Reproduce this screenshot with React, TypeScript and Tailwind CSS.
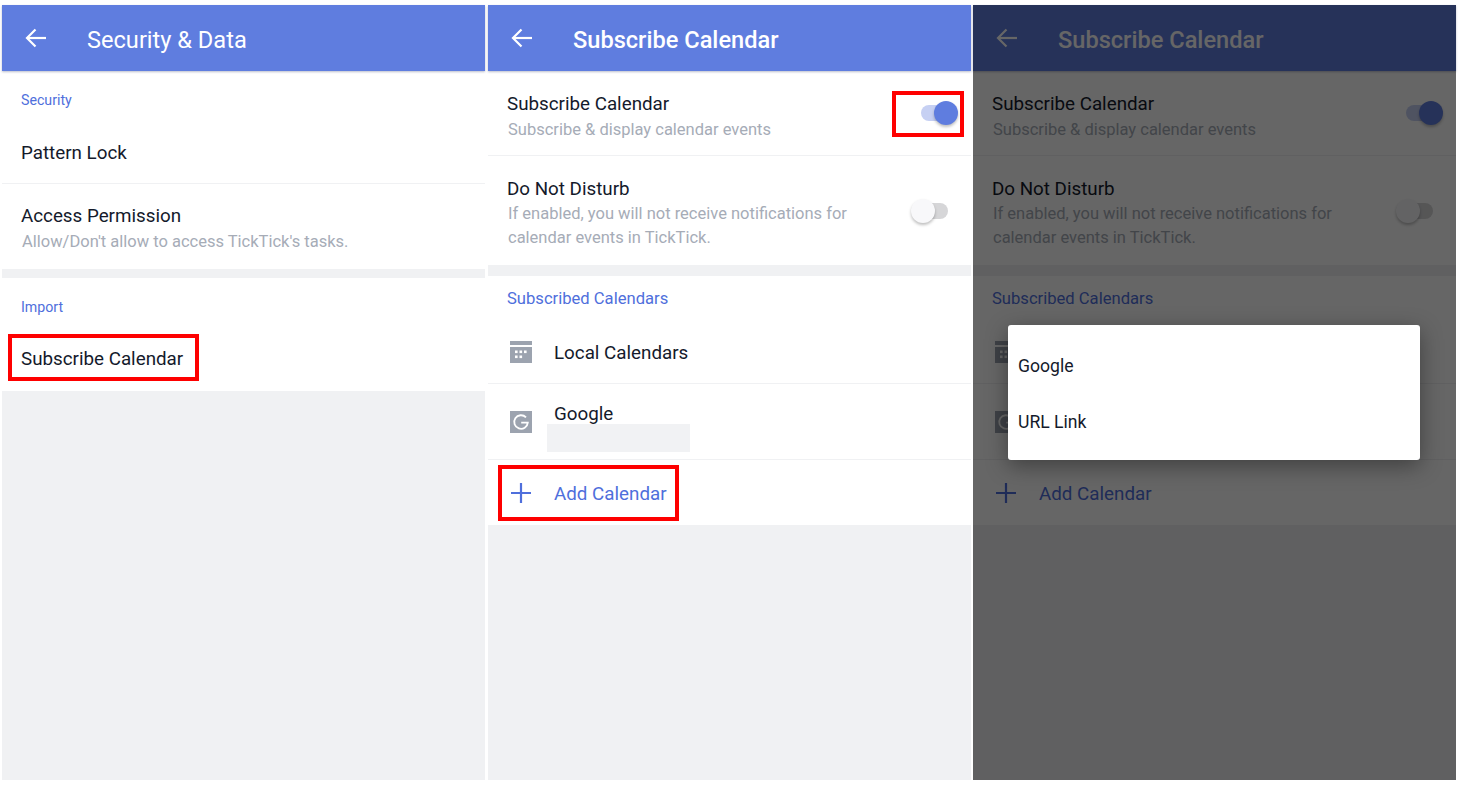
import type { ReactNode } from "react";

const font = "font-['Roboto',sans-serif]";

function BackArrow() {
  return (
    <svg width="22" height="20" viewBox="0 0 22 20" fill="none" stroke="currentColor" strokeWidth="2.2">
      <path d="M21 10H2.5" />
      <path d="M10.5 1.5 2 10l8.5 8.5" />
    </svg>
  );
}

function Header({ title, medium }: { title: string; medium?: boolean }) {
  return (
    <div className="h-[66px] shrink-0 bg-[#5f7ddf] text-white flex items-center pl-[23px] shadow-[0_1px_2px_rgba(60,70,110,0.35)] relative">
      <BackArrow />
      <span className={`ml-[40px] mt-[5px] text-[23.6px] leading-none ${medium ? "font-medium" : ""}`}>{title}</span>
    </div>
  );
}

function SectionLabel({ children, className }: { children: ReactNode; className: string }) {
  return <div className={`pl-[19px] pt-[2px] text-[#4f6fdc] flex items-center ${className}`}>{children}</div>;
}

function Toggle({ on }: { on: boolean }) {
  return on ? (
    <div className="w-[37px] h-[24px] relative">
      <div className="absolute left-0 top-[4px] w-[30px] h-[16px] rounded-full bg-[#c6d0f3]" />
      <div className="absolute right-0 top-0 w-[24px] h-[24px] rounded-full bg-[#5f7ddf] shadow-[0_2px_3px_rgba(0,0,0,0.25)]" />
    </div>
  ) : (
    <div className="w-[37px] h-[24px] relative">
      <div className="absolute right-0 top-[4px] w-[30px] h-[16px] rounded-full bg-[#d6d6d8]" />
      <div className="absolute left-0 top-0 w-[24px] h-[24px] rounded-full bg-[#f8f8fa] shadow-[0_2px_3px_rgba(0,0,0,0.25)]" />
    </div>
  );
}

function CalendarIcon() {
  return (
    <svg width="22" height="22" viewBox="0 0 22 22" fill="#9ca3af">
      <rect x="0" y="0" width="22" height="4" />
      <rect x="0" y="6" width="22" height="16" />
      <g fill="#fff">
        <rect x="5" y="9.5" width="2.6" height="2.6" />
        <rect x="9.5" y="9.5" width="2.6" height="2.6" />
        <rect x="14" y="9.5" width="2.6" height="2.6" />
        <rect x="5" y="14.5" width="2.6" height="2.6" />
        <rect x="9.5" y="14.5" width="2.6" height="2.6" />
      </g>
    </svg>
  );
}

function GoogleIcon() {
  return (
    <svg width="22" height="22" viewBox="0 0 22 22" fill="none">
      <rect width="22" height="22" fill="#9ca3af" />
      <path d="M16 6.4A6.8 6.8 0 1 0 17.8 11.6H11.2" stroke="#fff" strokeWidth="1.8" />
    </svg>
  );
}

function PlusIcon() {
  return (
    <svg width="20" height="20" viewBox="0 0 20 20" stroke="#4f6fdc" strokeWidth="2.2">
      <path d="M10 0v20M0 10h20" />
    </svg>
  );
}

function RedBox({ className }: { className: string }) {
  return <div className={`absolute border-[4px] border-[#fe0000] ${className}`} />;
}

function SecurityPanel() {
  return (
    <div className="w-[483px] h-[775px] bg-[#f0f1f3] flex flex-col text-[18.8px] text-[#141a2b]">
      <Header title="Security & Data" />
      <div className="bg-white h-[198px] flex flex-col">
        <SectionLabel className="h-[58px] text-[14.2px]">Security</SectionLabel>
        <div className="h-[55px] pb-[6px] pl-[19px] flex items-center border-b border-[#f0f1f3]">Pattern Lock</div>
        <div className="pl-[19px] pt-[19px]">
          <div className="leading-[26px]">Access Permission</div>
          <div className="text-[16.5px] leading-[25px] text-[#a6acb7] pl-px">Allow/Don't allow to access TickTick's tasks.</div>
        </div>
      </div>
      <div className="bg-white mt-[9px] h-[113px] flex flex-col">
        <SectionLabel className="h-[58px] text-[14.2px]">Import</SectionLabel>
        <div className="relative h-[46px] pl-[19px] flex items-center">
          <span className="mt-[1px]">Subscribe Calendar</span>
          <RedBox className="left-[6px] top-[-2px] w-[191px] h-[47px]" />
        </div>
      </div>
    </div>
  );
}

function CalendarPanel({ dimmed }: { dimmed?: boolean }) {
  return (
    <div className="w-[483px] h-[775px] bg-[#f0f1f3] flex flex-col text-[18.8px] text-[#141a2b] relative">
      <Header title="Subscribe Calendar" medium />
      <div className="bg-white">
        <div className="relative h-[85px] pl-[19px] pr-[13px] pt-[20px] flex justify-between border-b border-[#f0f1f3]">
          <div>
            <div className="leading-[26px]">Subscribe Calendar</div>
            <div className="text-[16.5px] leading-[25px] text-[#a6acb7] pl-px">Subscribe &amp; display calendar events</div>
          </div>
          <div className="pt-[10px]">
            <Toggle on />
          </div>
          {!dimmed && <RedBox className="right-[7px] top-[20px] w-[72px] h-[46px]" />}
        </div>
        <div className="h-[109px] pl-[19px] pr-[23px] pt-[20px] flex justify-between">
          <div>
            <div className="leading-[26px]">Do Not Disturb</div>
            <div className="text-[16.5px] leading-[24px] text-[#a6acb7] pl-px w-[370px]">
              If enabled, you will not receive notifications for calendar events in TickTick.
            </div>
          </div>
          <div className="pt-[23px]">
            <Toggle on={false} />
          </div>
        </div>
      </div>
      <div className="bg-white mt-[11px] flex flex-col">
        <SectionLabel className="h-[44px] text-[16.6px]">Subscribed Calendars</SectionLabel>
        <div className="h-[64px] pl-[22px] flex items-center gap-[22px] border-b border-[#f0f1f3]">
          <CalendarIcon />
          <span className="mt-[3px]">Local Calendars</span>
        </div>
        <div className="relative h-[76px] pl-[22px] flex items-center gap-[22px] border-b border-[#f0f1f3]">
          <GoogleIcon />
          <span className="self-start pt-[17px] leading-[26px]">Google</span>
          <div className="absolute left-[59px] top-[40px] w-[143px] h-[28px] bg-[#f1f2f4]" />
        </div>
        <div className="relative h-[65px] pl-[23px] flex items-center gap-[23px] text-[#4f6fdc]">
          <PlusIcon />
          <span className="mt-[3px]">Add Calendar</span>
          {!dimmed && <RedBox className="left-[10px] top-[5px] w-[181px] h-[56px]" />}
        </div>
      </div>
      {dimmed && (
        <>
          <div className="absolute inset-0 bg-black/60" />
          <div className="absolute left-[35px] top-[320px] w-[412px] h-[135px] bg-white rounded-[3px] shadow-[0_6px_22px_rgba(0,0,0,0.38)] pl-[10px] flex flex-col text-[17.6px]">
            <div className="h-[56px] mt-[13px] flex items-center">Google</div>
            <div className="h-[56px] flex items-center">URL Link</div>
          </div>
        </>
      )}
    </div>
  );
}

export default function App() {
  return (
    <div className={`${font} w-[1460px] h-[785px] bg-white pt-[5px] pl-[2px] flex overflow-hidden`}>
      <SecurityPanel />
      <div className="w-[3px] shrink-0" />
      <CalendarPanel />
      <div className="w-[2px] shrink-0" />
      <CalendarPanel dimmed />
    </div>
  );
}
